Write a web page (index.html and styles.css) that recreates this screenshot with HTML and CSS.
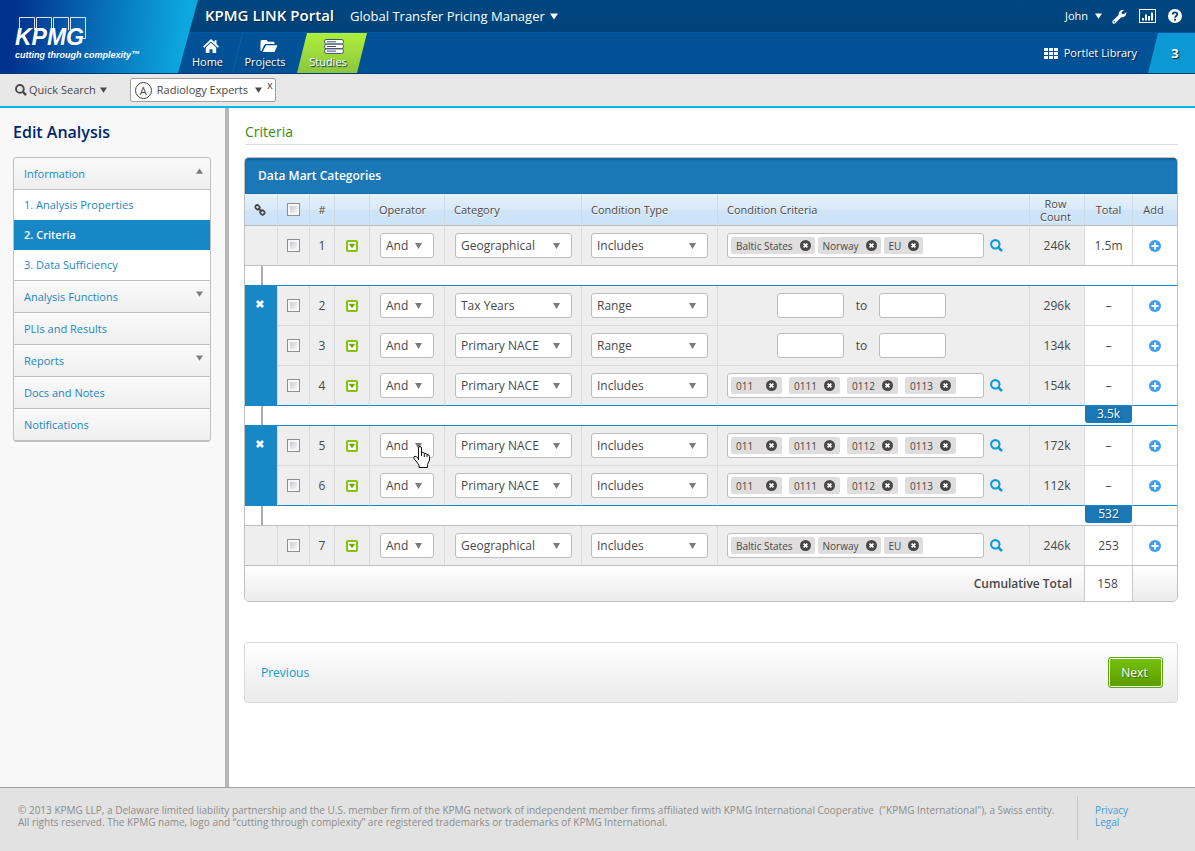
FILE: index.html
```html
<!DOCTYPE html>
<html lang="en">
<head>
<meta charset="utf-8">
<title>KPMG LINK Portal - Edit Analysis</title>
<link rel="stylesheet" href="styles.css">
</head>
<body>
<svg class="sprite" aria-hidden="true">
  <symbol id="i-menu" viewBox="0 0 12 12"><rect x="1" y="1" width="10" height="10" rx="1" fill="#fff" stroke="#83c40d" stroke-width="2"/><path d="M2.500 3.800h7L6 8.200z" fill="#6fae00"/></symbol>
  <symbol id="i-x" viewBox="0 0 11 11"><circle cx="5.5" cy="5.5" r="5.5" fill="#484848"/><path d="M3.6 3.6l3.8 3.8M7.4 3.6L3.6 7.4" stroke="#fff" stroke-width="1.7"/></symbol>
  <symbol id="i-search" viewBox="0 0 13 13"><circle cx="5.3" cy="5.3" r="4.2" fill="none" stroke="currentColor" stroke-width="2.1"/><path d="M8.3 8.3l3.7 3.7" stroke="currentColor" stroke-width="2.5"/></symbol>
  <symbol id="i-add" viewBox="0 0 12 12"><circle cx="6" cy="6" r="6" fill="#3f9fee"/><path d="M6 2.5v7M2.5 6h7" stroke="#fff" stroke-width="2"/></symbol>
  <symbol id="i-cross" viewBox="0 0 8 8"><path d="M1 1l6 6M7 1L1 7" stroke="#fff" stroke-width="2.7"/></symbol>
  <symbol id="i-down" viewBox="0 0 8 6"><path d="M0 0h8L4 6z" fill="currentColor"/></symbol>
</svg>

<header class="header">
  <a class="logo" href="#" aria-label="KPMG cutting through complexity">
    <svg width="150" height="50" viewBox="0 0 150 50">
      <g fill="none" stroke="#fff" stroke-width="1" opacity=".85"><path d="M19.500 17V1.500H34.500V14M36.500 14V1.500H51.500V14M53.500 14V1.500H68.500V14M70.500 14V1.500H85.500V22.500H82"/></g>
      <text class="logo-name" x="15" y="29">KPMG</text>
      <text class="logo-tag" x="15" y="42">cutting through complexity<tspan dy="-1">™</tspan></text>
    </svg>
  </a>
  <div class="header-body">
    <div class="topbar">
      <strong class="portal">KPMG LINK Portal</strong>
      <button class="plain role" type="button">Global Transfer Pricing Manager <svg class="arrow"><use href="#i-down"/></svg></button>
      <div class="tools">
        <button class="plain user" type="button">John <svg class="arrow small"><use href="#i-down"/></svg></button>
        <button class="plain" type="button" aria-label="Settings"><svg width="15" height="15" viewBox="0 0 15 15"><path d="M2 13l6.500-6.500" stroke="#fff" stroke-width="3.400" stroke-linecap="round"/><path d="M7 7C5.800 3.500 8.500.300 12 .900L9.700 3.200l.400 1.700 1.700.400 2.400-2.300C15 6.500 11.700 9.200 8.300 8z" fill="#fff"/><circle cx="2.200" cy="12.700" r=".7" fill="#00437d"/></svg></button>
        <button class="plain" type="button" aria-label="Reports"><svg width="17" height="14" viewBox="0 0 17 14"><rect x=".5" y=".5" width="16" height="13" fill="none" stroke="#fff"/><path d="M4 11.500V9M7 11.500V5.500M10 11.500V7M13 11.500V3.500" stroke="#fff" stroke-width="2"/></svg></button>
        <button class="plain" type="button" aria-label="Help"><svg width="14" height="14" viewBox="0 0 14 14"><circle cx="7" cy="7" r="7" fill="#fff"/><path d="M4.700 5.500C4.700 2.600 9.400 2.700 9.300 5.300 9.300 6.900 7.100 6.900 7.100 8.700M7.100 9.800v2" fill="none" stroke="#00437d" stroke-width="1.900"/></svg></button>
      </div>
    </div>
    <nav class="mainnav" aria-label="Main">
      <a class="nav-item home" href="#"><svg width="16" height="15" viewBox="0 0 16 15"><path d="M8 0L0 7.500l1.200 1.200L8 2.400l6.800 6.300L16 7.500l-2.500-2.400V1.200h-2v2z" fill="#fff"/><path d="M8 3.700L2.800 8.500V14H6.500v-3.800h3V14h3.700V8.500z" fill="#fff"/></svg>Home</a>
      <a class="nav-item projects" href="#"><svg width="18" height="15" viewBox="0 0 18 15"><path d="M.5 12V2.500Q.5 1 2 1h4.500L8 2.800h5.500q1 0 1 1V5H5.800q-1 0-1.500 1L1.300 12z" fill="#fff"/><path d="M6 6.200h11.500L14.500 13H2.500z" fill="#fff"/></svg>Projects</a>
      <a class="nav-item studies" href="#" aria-current="page"><svg width="20" height="15" viewBox="0 0 20 15"><g fill="#fff" stroke="#3d5170"><rect x=".7" y=".5" width="18.600" height="4.500" rx="1.500"/><rect x=".7" y="5.200" width="18.600" height="4.500" rx="1.500"/><rect x=".7" y="9.900" width="18.600" height="4.500" rx="1.500"/></g><path d="M3 2.800h9M3 7.500h9M3 12.100h9" stroke="#3d5170"/></svg>Studies</a>
      <a class="library" href="#"><svg width="14" height="11" viewBox="0 0 14 11"><path d="M0 0h4v3H0zM5 0h4v3H5zM10 0h4v3h-4zM0 4h4v3H0zM5 4h4v3H5zM10 4h4v3h-4zM0 8h4v3H0zM5 8h4v3H5zM10 8h4v3h-4z" fill="#fff"/></svg>Portlet Library</a>
      <a class="count" href="#">3</a>
    </nav>
  </div>
</header>

<div class="toolbar">
  <button class="plain quick" type="button"><svg width="12" height="12"><use href="#i-search"/></svg>Quick Search<svg class="arrow small"><use href="#i-down"/></svg></button>
  <div class="chip">
    <span class="chip-badge">A</span>
    <button class="plain" type="button">Radiology Experts<svg class="arrow small"><use href="#i-down"/></svg></button>
    <button class="plain chip-close" type="button" aria-label="Close">x</button>
  </div>
</div>

<div class="page">
  <aside class="sidebar">
    <h1>Edit Analysis</h1>
    <nav class="menu" aria-label="Analysis">
      <a class="group" href="#">Information<svg class="arrow tiny up"><use href="#i-down"/></svg></a>
      <a class="sub" href="#">1. Analysis Properties</a>
      <a class="sub active" href="#">2. Criteria</a>
      <a class="sub" href="#">3. Data Sufficiency</a>
      <a class="group ruled" href="#">Analysis Functions<svg class="arrow tiny"><use href="#i-down"/></svg></a>
      <a class="group" href="#">PLIs and Results</a>
      <a class="group" href="#">Reports<svg class="arrow tiny"><use href="#i-down"/></svg></a>
      <a class="group" href="#">Docs and Notes</a>
      <a class="group" href="#">Notifications</a>
    </nav>
  </aside>

  <main class="main">
    <h2>Criteria</h2>
    <section class="panel">
      <h3>Data Mart Categories</h3>
      <table class="grid">
        <colgroup><col class="c-link"><col class="c-check"><col class="c-num"><col class="c-menu"><col class="c-op"><col class="c-cat"><col class="c-type"><col><col class="c-rows"><col class="c-total"><col class="c-add"></colgroup>
        <thead>
          <tr>
            <th><svg class="chain" width="12" height="12" viewBox="0 0 12 12" role="img" aria-label="Linked"><g fill="none" stroke="#444" stroke-width="1.700"><rect x="1.200" y="1.400" width="4.600" height="3.800" rx="1.900" transform="rotate(45 3.500 3.300)"/><rect x="6.100" y="6.600" width="4.600" height="3.800" rx="1.900" transform="rotate(45 8.400 8.500)"/><path d="M4.200 4.200l3.500 3.500"/></g></svg></th>
            <th><input type="checkbox" aria-label="Select all rows"></th>
            <th>#</th><th></th>
            <th class="text">Operator</th><th class="text">Category</th><th class="text">Condition Type</th><th class="text">Condition Criteria</th>
            <th class="two">Row Count</th><th>Total</th><th class="last">Add</th>
          </tr>
        </thead>
        <tbody>
          <tr>
            <td></td><td><input type="checkbox" aria-label="Select row 1"></td><td>1</td>
            <td><button class="plain" type="button" aria-label="Row 1 menu"><svg class="i12"><use href="#i-menu"/></svg></button></td>
            <td class="field"><select class="op" aria-label="Operator 1"><option>And</option></select></td>
            <td class="field"><select aria-label="Category 1"><option>Geographical</option></select></td>
            <td class="field near"><select aria-label="Condition type 1"><option>Includes</option></select></td>
            <td class="field near"><div class="criteria"><div class="tags words"><span class="tag">Baltic States<button class="plain" type="button" aria-label="Remove Baltic States"><svg><use href="#i-x"/></svg></button></span><span class="tag">Norway<button class="plain" type="button" aria-label="Remove Norway"><svg><use href="#i-x"/></svg></button></span><span class="tag">EU<button class="plain" type="button" aria-label="Remove EU"><svg><use href="#i-x"/></svg></button></span></div><button class="plain find" type="button" aria-label="Search"><svg><use href="#i-search"/></svg></button></div></td>
            <td>246k</td><td class="white">1.5m</td><td class="white"><button class="plain" type="button" aria-label="Add"><svg class="i12"><use href="#i-add"/></svg></button></td>
          </tr>
          <tr class="gap blue"><td colspan="11"><span class="stem"></span></td></tr>
          <tr>
            <td class="linked" rowspan="3"><button class="plain" type="button" aria-label="Unlink rows 2 to 4"><svg><use href="#i-cross"/></svg></button></td><td><input type="checkbox" aria-label="Select row 2"></td><td>2</td>
            <td><button class="plain" type="button" aria-label="Row 2 menu"><svg class="i12"><use href="#i-menu"/></svg></button></td>
            <td class="field"><select class="op" aria-label="Operator 2"><option>And</option></select></td>
            <td class="field"><select aria-label="Category 2"><option>Tax Years</option></select></td>
            <td class="field near"><select aria-label="Condition type 2"><option>Range</option></select></td>
            <td class="field"><div class="range"><input type="text" aria-label="From, row 2"><span>to</span><input type="text" aria-label="To, row 2"></div></td>
            <td>296k</td><td class="white">–</td><td class="white"><button class="plain" type="button" aria-label="Add"><svg class="i12"><use href="#i-add"/></svg></button></td>
          </tr>
          <tr>
            <td><input type="checkbox" aria-label="Select row 3"></td><td>3</td>
            <td><button class="plain" type="button" aria-label="Row 3 menu"><svg class="i12"><use href="#i-menu"/></svg></button></td>
            <td class="field"><select class="op" aria-label="Operator 3"><option>And</option></select></td>
            <td class="field"><select aria-label="Category 3"><option>Primary NACE</option></select></td>
            <td class="field near"><select aria-label="Condition type 3"><option>Range</option></select></td>
            <td class="field"><div class="range"><input type="text" aria-label="From, row 3"><span>to</span><input type="text" aria-label="To, row 3"></div></td>
            <td>134k</td><td class="white">–</td><td class="white"><button class="plain" type="button" aria-label="Add"><svg class="i12"><use href="#i-add"/></svg></button></td>
          </tr>
          <tr class="blue">
            <td><input type="checkbox" aria-label="Select row 4"></td><td>4</td>
            <td><button class="plain" type="button" aria-label="Row 4 menu"><svg class="i12"><use href="#i-menu"/></svg></button></td>
            <td class="field"><select class="op" aria-label="Operator 4"><option>And</option></select></td>
            <td class="field"><select aria-label="Category 4"><option>Primary NACE</option></select></td>
            <td class="field near"><select aria-label="Condition type 4"><option>Includes</option></select></td>
            <td class="field near"><div class="criteria"><div class="tags"><span class="tag">011<button class="plain" type="button" aria-label="Remove 011"><svg><use href="#i-x"/></svg></button></span><span class="tag">0111<button class="plain" type="button" aria-label="Remove 0111"><svg><use href="#i-x"/></svg></button></span><span class="tag">0112<button class="plain" type="button" aria-label="Remove 0112"><svg><use href="#i-x"/></svg></button></span><span class="tag">0113<button class="plain" type="button" aria-label="Remove 0113"><svg><use href="#i-x"/></svg></button></span></div><button class="plain find" type="button" aria-label="Search"><svg><use href="#i-search"/></svg></button></div></td>
            <td>154k</td><td class="white">–</td><td class="white"><button class="plain" type="button" aria-label="Add"><svg class="i12"><use href="#i-add"/></svg></button></td>
          </tr>
          <tr class="gap blue"><td colspan="9"><span class="stem"></span></td><td class="sumcell"><span class="sum">3.5k</span></td><td></td></tr>
          <tr>
            <td class="linked" rowspan="2"><button class="plain" type="button" aria-label="Unlink rows 5 and 6"><svg><use href="#i-cross"/></svg></button></td><td><input type="checkbox" aria-label="Select row 5"></td><td>5</td>
            <td><button class="plain" type="button" aria-label="Row 5 menu"><svg class="i12"><use href="#i-menu"/></svg></button></td>
            <td class="field pointed"><select class="op" aria-label="Operator 5"><option>And</option></select><svg class="pointer" width="17" height="22" viewBox="0 0 17 22" aria-hidden="true"><path d="M5.500 14V2Q5.500.500 7 .500T8.500 2V6.500Q11 5.500 11.300 7.500 13.500 6.500 14 8.700 16.500 8.200 16.500 10.500V14L14.500 18.500V21.500H6V19L1 12.500Q.300 10.500 2 10.200 3.500 10 5.500 13" fill="#fff" stroke="#111"/><path d="M8.500 6v4M11.300 7v4M14 8.500V11" stroke="#111"/></svg></td>
            <td class="field"><select aria-label="Category 5"><option>Primary NACE</option></select></td>
            <td class="field near"><select aria-label="Condition type 5"><option>Includes</option></select></td>
            <td class="field near"><div class="criteria"><div class="tags"><span class="tag">011<button class="plain" type="button" aria-label="Remove 011"><svg><use href="#i-x"/></svg></button></span><span class="tag">0111<button class="plain" type="button" aria-label="Remove 0111"><svg><use href="#i-x"/></svg></button></span><span class="tag">0112<button class="plain" type="button" aria-label="Remove 0112"><svg><use href="#i-x"/></svg></button></span><span class="tag">0113<button class="plain" type="button" aria-label="Remove 0113"><svg><use href="#i-x"/></svg></button></span></div><button class="plain find" type="button" aria-label="Search"><svg><use href="#i-search"/></svg></button></div></td>
            <td>172k</td><td class="white">–</td><td class="white"><button class="plain" type="button" aria-label="Add"><svg class="i12"><use href="#i-add"/></svg></button></td>
          </tr>
          <tr class="blue">
            <td><input type="checkbox" aria-label="Select row 6"></td><td>6</td>
            <td><button class="plain" type="button" aria-label="Row 6 menu"><svg class="i12"><use href="#i-menu"/></svg></button></td>
            <td class="field"><select class="op" aria-label="Operator 6"><option>And</option></select></td>
            <td class="field"><select aria-label="Category 6"><option>Primary NACE</option></select></td>
            <td class="field near"><select aria-label="Condition type 6"><option>Includes</option></select></td>
            <td class="field near"><div class="criteria"><div class="tags"><span class="tag">011<button class="plain" type="button" aria-label="Remove 011"><svg><use href="#i-x"/></svg></button></span><span class="tag">0111<button class="plain" type="button" aria-label="Remove 0111"><svg><use href="#i-x"/></svg></button></span><span class="tag">0112<button class="plain" type="button" aria-label="Remove 0112"><svg><use href="#i-x"/></svg></button></span><span class="tag">0113<button class="plain" type="button" aria-label="Remove 0113"><svg><use href="#i-x"/></svg></button></span></div><button class="plain find" type="button" aria-label="Search"><svg><use href="#i-search"/></svg></button></div></td>
            <td>112k</td><td class="white">–</td><td class="white"><button class="plain" type="button" aria-label="Add"><svg class="i12"><use href="#i-add"/></svg></button></td>
          </tr>
          <tr class="gap"><td colspan="9"><span class="stem"></span></td><td class="sumcell"><span class="sum">532</span></td><td></td></tr>
          <tr class="strong">
            <td></td><td><input type="checkbox" aria-label="Select row 7"></td><td>7</td>
            <td><button class="plain" type="button" aria-label="Row 7 menu"><svg class="i12"><use href="#i-menu"/></svg></button></td>
            <td class="field"><select class="op" aria-label="Operator 7"><option>And</option></select></td>
            <td class="field"><select aria-label="Category 7"><option>Geographical</option></select></td>
            <td class="field near"><select aria-label="Condition type 7"><option>Includes</option></select></td>
            <td class="field near"><div class="criteria"><div class="tags words"><span class="tag">Baltic States<button class="plain" type="button" aria-label="Remove Baltic States"><svg><use href="#i-x"/></svg></button></span><span class="tag">Norway<button class="plain" type="button" aria-label="Remove Norway"><svg><use href="#i-x"/></svg></button></span><span class="tag">EU<button class="plain" type="button" aria-label="Remove EU"><svg><use href="#i-x"/></svg></button></span></div><button class="plain find" type="button" aria-label="Search"><svg><use href="#i-search"/></svg></button></div></td>
            <td>246k</td><td class="white">253</td><td class="white"><button class="plain" type="button" aria-label="Add"><svg class="i12"><use href="#i-add"/></svg></button></td>
          </tr>
        </tbody>
        <tfoot>
          <tr><th colspan="9" scope="row">Cumulative Total</th><td class="white">158</td><td></td></tr>
        </tfoot>
      </table>
    </section>
    <div class="pager">
      <a href="#">Previous</a>
      <button class="next" type="button">Next</button>
    </div>
  </main>
</div>

<footer class="footer">
  <p>© 2013 KPMG LLP, a Delaware limited liability partnership and the U.S. member firm of the KPMG network of independent member firms affiliated with KPMG International Cooperative &nbsp;("KPMG International"), a Swiss entity.<br>All rights reserved. The KPMG name, logo and “cutting through complexity” are registered trademarks or trademarks of KPMG International.</p>
  <nav class="legal" aria-label="Legal"><a href="#">Privacy</a><a href="#">Legal</a></nav>
</footer>
</body>
</html>
```

FILE: styles.css
```css
* { box-sizing: border-box; }
body {
  margin: 0;
  min-height: 100vh;
  display: flex;
  flex-direction: column;
  font: 12px/16px "Open Sans", "Noto Sans", sans-serif;
  color: #484848;
  background: #fff;
}
a { text-decoration: none; color: #1787c5; }
svg { display: block; flex: none; }
h1, h2, h3, p { margin: 0; }
.sprite { position: absolute; width: 0; height: 0; }
.plain {
  border: 0;
  padding: 0;
  background: none;
  font: inherit;
  color: inherit;
  display: inline-flex;
  align-items: center;
}
.arrow { width: 8px; height: 7px; }
.arrow.small { width: 7px; height: 6px; }
.arrow.tiny { width: 7px; height: 6px; color: #7d7d7d; }
.arrow.up { transform: rotate(180deg); }

/* header */
.header { display: flex; height: 74px; background: #005196; border-bottom: 1px solid #023c78; }
.logo {
  width: 198px;
  flex: none;
  padding-top: 16px;
  background: linear-gradient(95deg, #00338d 8%, #0da8e0 92%);
  clip-path: polygon(0 0, 100% 0, 178px 100%, 0 100%);
  z-index: 1;
}
.logo text { fill: #fff; font-family: "Liberation Sans", sans-serif; font-weight: 700; font-style: italic; }
.logo .logo-name { font-size: 23px; }
.logo .logo-tag { font-size: 9px; }
.header-body { flex: 1; margin-left: -20px; color: #fff; text-shadow: 1px 1px 1px #00264d; }
.topbar {
  display: flex;
  align-items: center;
  height: 33px;
  padding: 0 13px 0 27px;
  background: linear-gradient(#00467f, #00437b);
  border-bottom: 1px solid #0058a3;
}
.portal { font-size: 15px; line-height: 18px; padding-bottom: 2px; font-weight: 600; }
.role { margin-left: 16px; font-size: 13px; gap: 5px; }
.tools { margin-left: auto; display: flex; align-items: center; gap: 12px; }
.user { gap: 7px; margin-right: -2px; font-size: 11px; }
.mainnav { display: flex; height: 40px; font-size: 11px; }
.nav-item {
  position: relative;
  display: flex;
  flex-direction: column;
  align-items: center;
  justify-content: flex-end;
  color: #fff;
  padding-bottom: 4px;
  line-height: 15px;
  font-weight: 500;
}
.home { width: 59px; }
.home svg { margin-left: 6px; }
.projects { width: 56px; }
.projects svg { margin-left: 8px; }
.projects::before {
  content: "";
  position: absolute;
  left: 0;
  top: 0;
  height: 40px;
  border-left: 1px solid #0463ad;
  transform: skewX(-14deg);
}
.studies {
  width: 70px;
  margin-left: 4px;
  padding-right: 8px;
  background: linear-gradient(#aef03c, #8bc53f);
  clip-path: polygon(10px 0, 100% 0, 60px 100%, 0 100%);
}
.studies svg { margin-left: 12px; }
.library { margin-left: auto; display: flex; align-items: center; gap: 6px; color: #fff; }
.count {
  width: 47px;
  margin-left: 11px;
  padding-left: 7px;
  display: flex;
  align-items: center;
  justify-content: center;
  color: #fff;
  font-weight: 700;
  font-size: 13px;
  background: #0c98d2;
  clip-path: polygon(10px 0, 100% 0, 100% 100%, 0 100%);
}

/* toolbar */
.toolbar {
  display: flex;
  align-items: center;
  height: 34px;
  padding-left: 15px;
  font-size: 11px;
  background: #e8e8e8;
  border-bottom: 2px solid #00b4f0;
}
.quick { gap: 2px; }
.quick .arrow { margin-left: 2px; }
.chip {
  display: flex;
  align-items: center;
  gap: 5px;
  height: 24px;
  margin-left: 23px;
  padding: 0 2px 0 4px;
  background: #fff;
  border: 1px solid #a0a0a0;
  border-radius: 2px;
}
.chip .arrow { margin-left: 7px; }
.chip-badge {
  width: 17px;
  height: 17px;
  border: 1px solid #444;
  border-radius: 50%;
  line-height: 15px;
  text-align: center;
}
.chip-close { align-self: flex-start; line-height: 12px; }

/* page */
.page { flex: 1; display: flex; }
.sidebar { width: 229px; flex: none; padding: 14px 14px 0 13px; background: #f8f8f8; border-right: 4px solid #b5b7b7; }
h1 { font-size: 16px; line-height: 20px; font-weight: 600; color: #00256b; }
.menu { margin-top: 15px; border: 1px solid #c0c0c0; border-bottom-width: 2px; border-radius: 4px; overflow: hidden; }
.menu a { display: flex; align-items: center; justify-content: space-between; padding: 0 7px 0 10px; font-size: 11px; font-weight: 500; }
.group { height: 32px; background: linear-gradient(#fafafa, #efefef); border-bottom: 1px solid #c0c0c0; }
.group:last-child { height: 31px; border-bottom: 0; }
.group .arrow { margin-bottom: 6px; }
.sub { height: 30px; background: #fff; }
.menu .active { background: #1787c5; color: #fff; font-weight: 600; }
.ruled { height: 33px; border-top: 1px solid #c0c0c0; }
.main { flex: 1; min-width: 0; padding: 14px 17px 40px 15px; }
h2 { margin-left: 1px; padding-bottom: 2px; border-bottom: 1px solid #dcdcdc; font-size: 14px; line-height: 20px; font-weight: 500; color: #358a0c; }

/* criteria table */
.panel { margin-top: 12px; border: 1px solid #c0c0c0; border-radius: 5px; overflow: hidden; }
h3 { height: 36px; padding-left: 13px; font-size: 12px; line-height: 36px; font-weight: 600; color: #fff; background: #1a78b7; box-shadow: inset 0 2px 2px #146199; border-bottom: 1px solid #1570ad; }
.grid { width: 100%; table-layout: fixed; border-spacing: 0; }
.c-link { width: 33px; }
.c-check { width: 32px; }
.c-num { width: 25px; }
.c-menu { width: 35px; }
.c-op { width: 75px; }
.c-cat { width: 137px; }
.c-type { width: 136px; }
.c-rows { width: 55px; }
.c-total { width: 48px; }
.c-add { width: 44px; }
.grid th, .grid td { padding: 0; text-align: center; border-right: 1px solid #dadada; border-bottom: 1px solid #dadada; }
.grid tr > :last-child { border-right: 0; }
.grid thead th {
  height: 32px;
  font-size: 11px;
  line-height: 13px;
  font-weight: 400;
  background: linear-gradient(#e6f1fb, #d9e9f8 50%, #cfe4f8 52%, #cbe2f8);
  border-right-color: #ccdae6;
  border-bottom-color: #bcbcbc;
  text-shadow: 0 1px 0 #fff;
}
.grid thead .text { text-align: left; padding-left: 9px; }
.grid thead .two { padding: 0 10px 0 7px; }
.grid thead .last { padding-right: 3px; }
.chain { margin-left: 9px; }
.grid tbody td { height: 40px; background: #eee; }
.grid tbody .white { background: #fff; }
.grid tbody tr:first-child td, .grid tbody .strong td { border-bottom-color: #c0c0c0; }
.grid tbody .field { text-align: left; padding-left: 10px; }
.grid tbody .near { padding-left: 9px; }
.grid tbody .gap td { height: 20px; background: #fff; border-right: 0; border-bottom-color: #c0c0c0; vertical-align: top; }
.grid tbody .blue td, .grid tbody td.linked { border-bottom-color: #1787c5; }
.stem { display: block; width: 2px; height: 19px; margin-left: 16px; background: #adadad; }
.sum { display: block; height: 17px; margin-right: 1px; color: #fff; line-height: 16px; background: #1a78b7; border-radius: 0 0 3px 3px; text-shadow: 1px 1px 1px #0d4d7b; }
.grid tbody td.linked { background: #1787c5; vertical-align: top; padding-top: 14px; }
.linked svg { width: 8px; height: 8px; margin-right: 2px; }
.linked button { display: flex; margin: 0 auto; }
.i12 { width: 12px; height: 12px; }
.grid td > button { vertical-align: middle; }
input[type="checkbox"] {
  appearance: none;
  display: block;
  width: 13px;
  height: 13px;
  margin: 0 auto;
  border: 1px solid #8e8f8f;
  background: linear-gradient(135deg, #c8ccd2, #f4f4f4) content-box, #f7f7f7;
  padding: 2px;
}
select {
  appearance: none;
  display: block;
  width: 117px;
  height: 25px;
  padding: 0 20px 0 5px;
  border: 1px solid #bdbdbd;
  border-radius: 3px;
  font: inherit;
  color: inherit;
  background: #fff url("data:image/svg+xml,%3Csvg xmlns='http://www.w3.org/2000/svg' width='7' height='6'%3E%3Cpath d='M0 0h7L3.500 6z' fill='%237b7b7b'/%3E%3C/svg%3E") no-repeat right 11px center;
}
.op { width: 54px; background-position-x: right 10px; }
.criteria { display: flex; align-items: center; gap: 6px; }
.tags { display: flex; align-items: center; gap: 7px; width: 257px; height: 25px; padding: 0 3px; background: #fff; border: 1px solid #bdbdbd; border-radius: 3px; }
.tags.words { gap: 3px; }
.tag { display: flex; align-items: center; justify-content: space-between; gap: 6px; min-width: 51px; height: 17px; padding: 0 5px; font-size: 10px; background: #dfdddd; border-radius: 2px; }
.words .tag { gap: 7px; min-width: 39px; padding-right: 4px; }
.tag svg { width: 11px; height: 11px; }
.find svg { width: 13px; height: 13px; color: #0b9bd8; }
.range { display: flex; align-items: center; padding-left: 49px; }
.range input { width: 67px; height: 25px; border: 1px solid #bdbdbd; border-radius: 3px; background: #fff; font: inherit; }
.range span { width: 35px; text-align: center; }
.pointed { position: relative; }
.pointer { position: absolute; left: 43px; top: 20px; }
tfoot tr { background: linear-gradient(#fff, #ebebeb); }
.grid tfoot th, .grid tfoot td { height: 35px; border-bottom: 0; border-right-color: #c8c8c8; }
.grid tfoot th { text-align: right; padding-right: 12px; font-weight: 600; }
.grid tfoot .white { background: #fff; padding-right: 2px; }

/* pager */
.pager {
  display: flex;
  align-items: center;
  justify-content: space-between;
  height: 61px;
  margin-top: 40px;
  padding: 0 14px 0 16px;
  border: 1px solid #dadada;
  border-radius: 4px;
  background: linear-gradient(#fff, #ebebeb);
}
.pager a { color: #0b9bd8; }
.next {
  width: 55px;
  height: 31px;
  border: 1px solid #5fa60a;
  border-radius: 3px;
  padding: 0 2px 0 0;
  font: inherit;
  font-weight: 500;
  color: #fff;
  text-shadow: 1px 1px 1px #3c6b00;
  background: linear-gradient(#74c40a, #5c9a02);
  box-shadow: inset 0 0 0 1px #fff;
}

/* footer */
.footer { display: flex; min-height: 64px; padding: 8px 67px 11px 18px; background: #e2e2e2; border-top: 1px solid #a0a0a0; font-size: 10px; line-height: 12px; color: #8c8c8c; }
.footer p { flex: 1; padding-top: 8px; }
.legal { display: flex; flex-direction: column; padding: 8px 0 0 17px; border-left: 1px solid #c6c6c6; }
.legal a { color: #3f9ae0; }
```
